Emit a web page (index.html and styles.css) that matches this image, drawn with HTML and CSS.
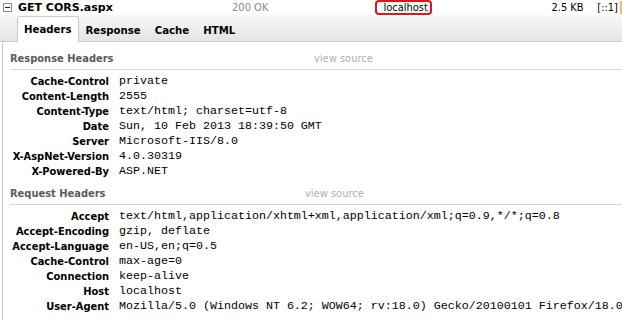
FILE: index.html
```html
<!DOCTYPE html>
<html lang="en">
<head>
  <meta charset="UTF-8">
  <title>GET CORS.aspx</title>
  <link rel="stylesheet" href="styles.css">
</head>
<body>

<div class="request-row">
  <span class="toggle"><span class="toggle-bar"></span></span>
  <span class="request-title">GET CORS.aspx</span>
  <span class="request-status">200 OK</span>
  <span class="request-host">localhost</span>
  <span class="request-size">2.5 KB</span>
  <span class="request-ip">[::1]</span>
</div>

<div class="tabs">
  <div class="tab tab-active">Headers</div>
  <div class="tab">Response</div>
  <div class="tab">Cache</div>
  <div class="tab">HTML</div>
</div>

<div class="panel">

  <div class="group-title">
    <span class="group-name group-response">Response Headers</span>
    <span class="view-source">view source</span>
  </div>
  <div class="headers">
    <div class="name">Cache-Control</div><div class="value">private</div>
    <div class="name">Content-Length</div><div class="value">2555</div>
    <div class="name">Content-Type</div><div class="value">text/html; charset=utf-8</div>
    <div class="name">Date</div><div class="value">Sun, 10 Feb 2013 18:39:50 GMT</div>
    <div class="name">Server</div><div class="value">Microsoft-IIS/8.0</div>
    <div class="name">X-AspNet-Version</div><div class="value">4.0.30319</div>
    <div class="name">X-Powered-By</div><div class="value">ASP.NET</div>
  </div>

  <div class="group-title">
    <span class="group-name group-request">Request Headers</span>
    <span class="view-source">view source</span>
  </div>
  <div class="headers">
    <div class="name">Accept</div><div class="value">text/html,application/xhtml+xml,application/xml;q=0.9,*/*;q=0.8</div>
    <div class="name">Accept-Encoding</div><div class="value">gzip, deflate</div>
    <div class="name">Accept-Language</div><div class="value">en-US,en;q=0.5</div>
    <div class="name">Cache-Control</div><div class="value">max-age=0</div>
    <div class="name">Connection</div><div class="value">keep-alive</div>
    <div class="name">Host</div><div class="value">localhost</div>
    <div class="name">User-Agent</div><div class="value">Mozilla/5.0 (Windows NT 6.2; WOW64; rv:18.0) Gecko/20100101 Firefox/18.0</div>
  </div>

</div>

</body>
</html>
```

FILE: styles.css
```css
body {
  margin: 0;
  font-family: 'DejaVu Sans Condensed', 'DejaVu Sans', sans-serif;
  font-size: 11px;
  color: #000;
  background: #fff;
  overflow: hidden;
}
.request-row {
  display: flex;
  align-items: center;
  height: 15px;
  white-space: nowrap;
}
.toggle {
  box-sizing: border-box;
  width: 9px;
  height: 9px;
  margin: 0 6px 0 3px;
  border: 1px solid #8c8c8c;
  display: flex;
  align-items: center;
  justify-content: center;
}
.toggle-bar {
  width: 5px;
  height: 1px;
  background: #222;
}
.request-title {
  font-family: 'DejaVu Sans', sans-serif;
  font-weight: bold;
  font-size: 11px;
  width: 215px;
}
.request-status {
  color: #8a8a8a;
  width: 144px;
}
.request-host {
  box-sizing: border-box;
  border: 2px solid #e8101a;
  border-radius: 4px;
  height: 15px;
  line-height: 11px;
  padding: 0 3px 0 6px;
  width: 57px;
}
.request-size {
  margin-left: 119px;
  width: 46px;
}
.request-ip {
  border-right: 2px solid #f0c060;
  padding-right: 2px;
}
.tabs {
  display: flex;
  align-items: flex-end;
  height: 27px;
  box-sizing: border-box;
  padding-left: 17px;
  background: linear-gradient(#f8f8f8, #e4e4e4);
  border-bottom: 1px solid #cbcbcb;
}
.tab {
  font-weight: bold;
  font-size: 11.3px;
  padding: 6px 6px 5px 6px;
  margin-bottom: -1px;
  border: 1px solid transparent;
  border-bottom: none;
}
.tab-active {
  background: #fff;
  border-color: #cbcbcb;
  border-radius: 3px 3px 0 0;
  padding-bottom: 6px;
}
.panel {
  margin-left: 2px;
  border-left: 1px solid #cbcbcb;
  padding: 10px 0 0 7px;
  height: 300px;
}
.group-title {
  display: flex;
  border-bottom: 1px solid #d6d6d6;
  height: 17px;
  margin-bottom: 4px;
}
.group-name {
  font-weight: bold;
  color: #5a5a5a;
  font-size: 11px;
}
.group-response {
  width: 304px;
}
.group-request {
  width: 295px;
}
.view-source {
  color: #b0b0b0;
}
.headers {
  display: grid;
  grid-template-columns: 99px auto;
  column-gap: 10px;
  margin-bottom: 8px;
  white-space: nowrap;
}
.name {
  font-weight: bold;
  text-align: right;
  height: 15px;
  line-height: 15px;
}
.value {
  font-family: 'Liberation Mono', monospace;
  font-size: 11.67px;
  height: 15px;
  line-height: 15px;
}
```
